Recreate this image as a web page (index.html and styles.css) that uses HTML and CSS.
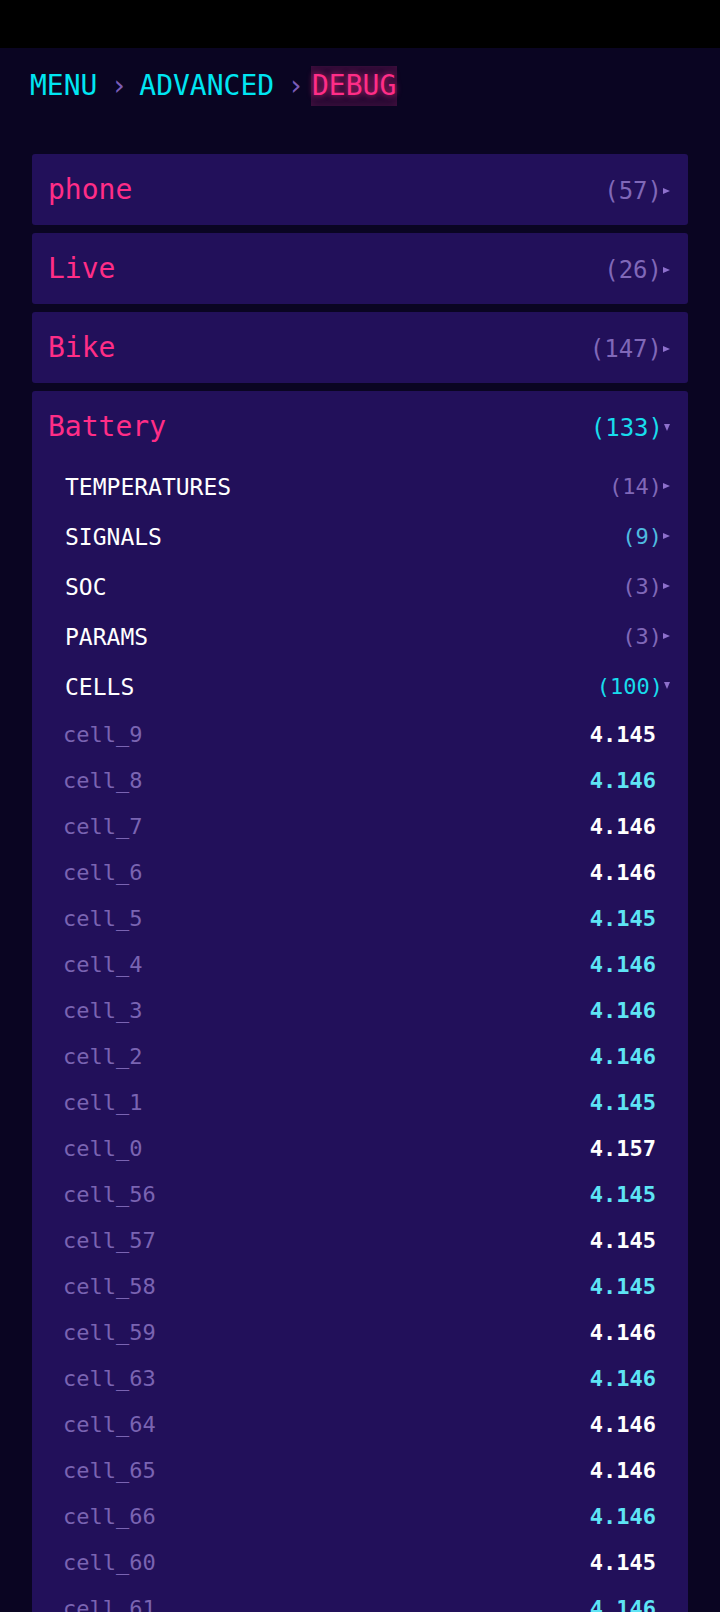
FILE: index.html
```html
<!DOCTYPE html>
<html>
<head>
	<meta http-equiv="Content-Type" content="text/html;charset=UTF-8">
	<title>Debug</title>
	<link rel="stylesheet" href="styles.css">
</head>
<body>
	<div class="statusbar"></div>
	<div class="crumbs">
		<span class="crumb">MENU</span><span class="sep">›</span>
		<span class="crumb">ADVANCED</span><span class="sep">›</span>
		<span class="crumb current">DEBUG</span>
	</div>

	<ul class="groups">
		<li class="group">
			<div class="head"><span class="name">phone</span><span class="count">(57)<i class="tri"></i></span></div>
		</li>
		<li class="group">
			<div class="head"><span class="name">Live</span><span class="count">(26)<i class="tri"></i></span></div>
		</li>
		<li class="group">
			<div class="head"><span class="name">Bike</span><span class="count">(147)<i class="tri"></i></span></div>
		</li>
		<li class="group open">
			<div class="head"><span class="name">Battery</span><span class="count on">(133)<i class="tri down"></i></span></div>
			<ul class="subs">
				<li class="sub"><span>TEMPERATURES</span><span class="count">(14)<i class="tri"></i></span></li>
				<li class="sub"><span>SIGNALS</span><span class="count live">(9)<i class="tri"></i></span></li>
				<li class="sub"><span>SOC</span><span class="count">(3)<i class="tri"></i></span></li>
				<li class="sub"><span>PARAMS</span><span class="count">(3)<i class="tri"></i></span></li>
				<li class="sub"><span>CELLS</span><span class="count on">(100)<i class="tri down"></i></span></li>
			</ul>
			<ul class="cells">
				<li><span class="key">cell_9</span><span class="val">4.145</span></li>
				<li><span class="key">cell_8</span><span class="val hot">4.146</span></li>
				<li><span class="key">cell_7</span><span class="val">4.146</span></li>
				<li><span class="key">cell_6</span><span class="val">4.146</span></li>
				<li><span class="key">cell_5</span><span class="val hot">4.145</span></li>
				<li><span class="key">cell_4</span><span class="val hot">4.146</span></li>
				<li><span class="key">cell_3</span><span class="val hot">4.146</span></li>
				<li><span class="key">cell_2</span><span class="val hot">4.146</span></li>
				<li><span class="key">cell_1</span><span class="val hot">4.145</span></li>
				<li><span class="key">cell_0</span><span class="val">4.157</span></li>
				<li><span class="key">cell_56</span><span class="val hot">4.145</span></li>
				<li><span class="key">cell_57</span><span class="val">4.145</span></li>
				<li><span class="key">cell_58</span><span class="val hot">4.145</span></li>
				<li><span class="key">cell_59</span><span class="val">4.146</span></li>
				<li><span class="key">cell_63</span><span class="val hot">4.146</span></li>
				<li><span class="key">cell_64</span><span class="val">4.146</span></li>
				<li><span class="key">cell_65</span><span class="val">4.146</span></li>
				<li><span class="key">cell_66</span><span class="val hot">4.146</span></li>
				<li><span class="key">cell_60</span><span class="val">4.145</span></li>
				<li><span class="key">cell_61</span><span class="val hot">4.146</span></li>
				<li><span class="key">cell_62</span><span class="val">4.145</span></li>
				<li><span class="key">cell_67</span><span class="val">4.146</span></li>
			</ul>
		</li>
	</ul>
</body>
</html>
```

FILE: styles.css
```css
*{ margin: 0; padding: 0; box-sizing: border-box; }
body{ background: #0a0522; font-family: "DejaVu Sans Mono", "Liberation Mono", monospace; color: #fff; }
ul{ list-style: none; }

.statusbar{ height: 48px; background: #000; }

/* breadcrumb */
.crumbs{ display: flex; padding: 18px 30px 0; font-size: 28px; line-height: 40px; }
.crumb{ color: #00e6f2; }
.sep{ color: #7b5cb8; margin: 0 12px 0 13px; }
.crumb.current{ color: #ff2d87; background: #260a33; padding: 0 1px; margin-left: -5px; text-shadow: 0 0 6px rgba(255,45,135,.75); box-shadow: inset 0 0 10px rgba(255,45,135,.15); }

/* groups */
.groups{ margin: 48px 32px 0; display: flex; flex-direction: column; gap: 8px; }
.group{ background: #22105a; border-radius: 3px; }
.head{ display: flex; align-items: baseline; justify-content: space-between; height: 71px; padding: 19px 18px 0 16px; }
.head .name{ color: #ff2d87; font-size: 28px; }
.count{ color: #8068b8; font-size: 24px; }
.count.on{ color: #18dcec; }
.count.live{ color: #4fbbe0; }

.tri{ display: inline-block; width: 0; height: 0; margin-left: 1px; vertical-align: 5px;
	border-top: 3.5px solid transparent; border-bottom: 3.5px solid transparent; border-left: 7px solid #8e70cc; }
.tri.down{ border: 3.5px solid transparent; border-top: 7px solid #8e70cc; border-bottom: 0; }

.sub{ display: flex; justify-content: space-between; height: 50px; line-height: 50px; padding: 0 18px 0 33px; font-size: 23px; }
.sub .count{ font-size: 22px; }

.cells li{ display: flex; justify-content: space-between; height: 46px; line-height: 46px; padding: 0 32px 0 31px; font-size: 22px; }
.key{ color: #7a64b2; }
.val{ color: #fff; font-weight: bold; }
.val.hot{ color: #5ee4f5; }
```
